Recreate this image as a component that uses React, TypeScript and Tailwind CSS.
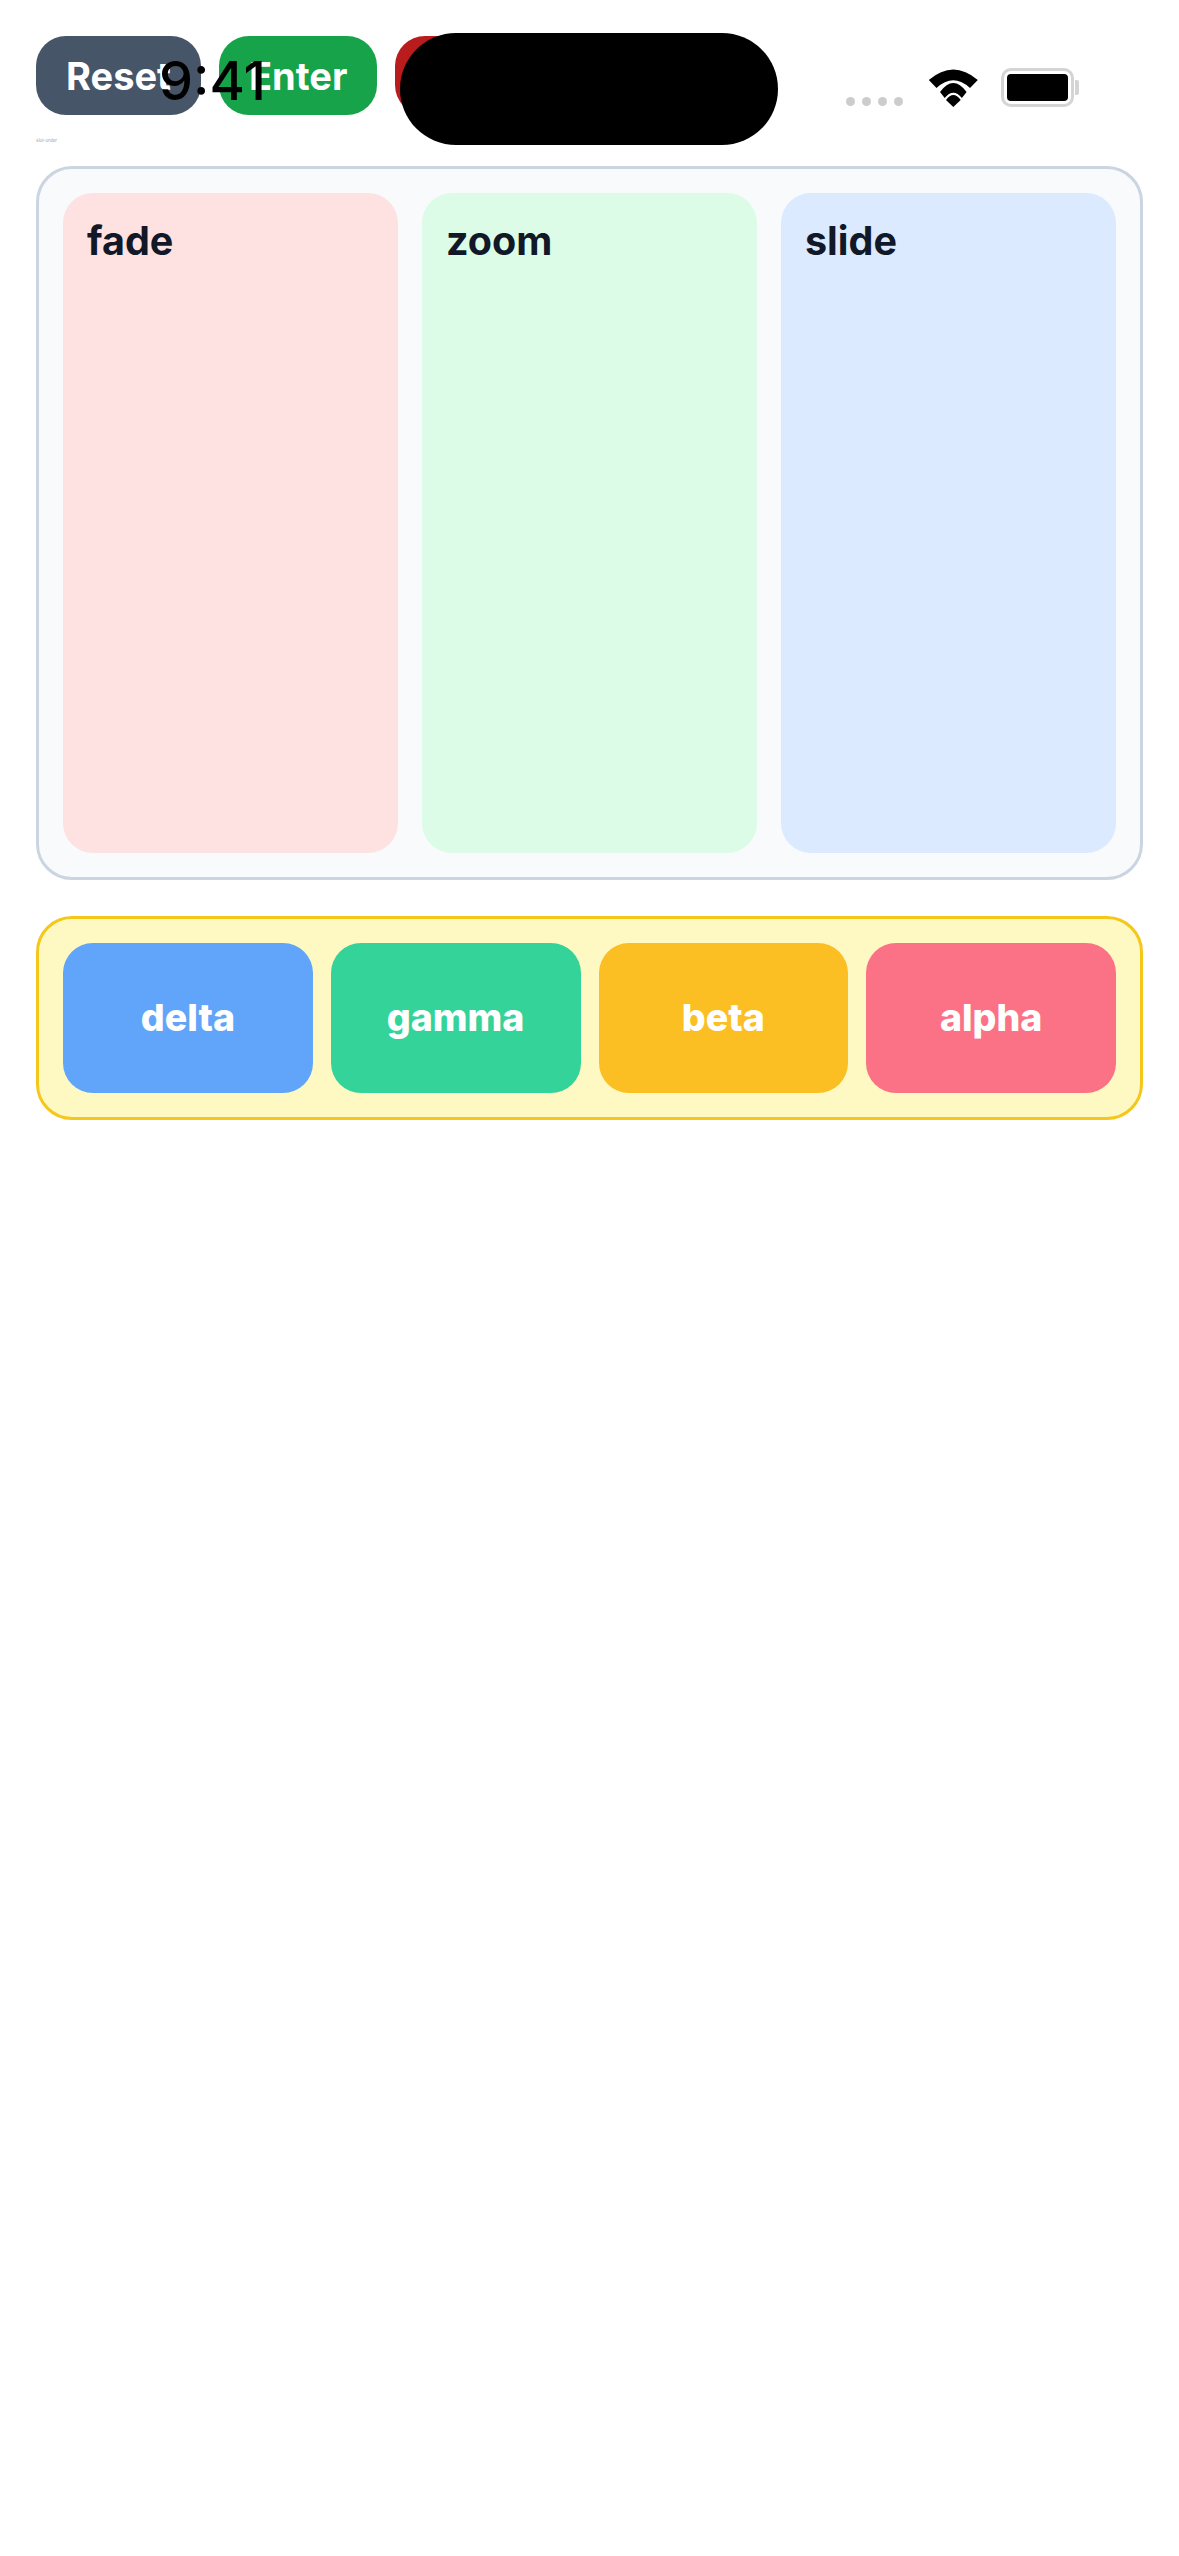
const columns = [
  { name: "fade", bg: "bg-[#fee2e2]" },
  { name: "zoom", bg: "bg-[#dcfce7]" },
  { name: "slide", bg: "bg-[#dbeafe]" },
];

const chips = [
  { name: "delta", bg: "bg-[#60a5fa]" },
  { name: "gamma", bg: "bg-[#34d399]" },
  { name: "beta", bg: "bg-[#fbbf24]" },
  { name: "alpha", bg: "bg-[#fb7185]" },
];

function StatusBar() {
  return (
    <div className="absolute left-0 top-0 h-[150px] w-[1179px]">
      <span className="absolute left-[159px] top-[50px] font-['Inter',sans-serif] text-[54px] font-medium leading-[62px] text-black">
        9:41
      </span>
      <div className="absolute left-[400px] top-[33px] h-[112px] w-[378px] rounded-[56px] bg-black" />
      <div className="absolute left-[846px] top-[97px] flex gap-[7px]">
        <div className="h-[9px] w-[9px] rounded-full bg-[#cccccc]" />
        <div className="h-[9px] w-[9px] rounded-full bg-[#cccccc]" />
        <div className="h-[9px] w-[9px] rounded-full bg-[#cccccc]" />
        <div className="h-[9px] w-[9px] rounded-full bg-[#cccccc]" />
      </div>
      <svg className="absolute left-[928px] top-[69px]" width="50" height="38" viewBox="0 0 50 38">
        <path d="M0.8 11 Q25.3 -10 49.8 11 L42 19 Q25.3 3.5 8.5 19 Z" fill="#000" />
        <path d="M12 23 Q25.3 5 38.6 23 L33.9 29 Q25.3 18.5 16.7 29 Z" fill="#000" />
        <path d="M18 31 Q25.3 21 32.7 31 L25.3 38 Z" fill="#000" />
      </svg>
      <div className="absolute left-[1001px] top-[68px] h-[39px] w-[73px] rounded-[10px] border-[3px] border-[#d4d4d4] bg-white p-[3px]">
        <div className="h-full w-full rounded-[4px] bg-black" />
      </div>
      <div className="absolute left-[1075px] top-[80px] h-[15px] w-[4px] rounded-r-[2px] bg-[#d4d4d4]" />
    </div>
  );
}

export default function App() {
  return (
    <div className="relative min-h-[2556px] w-[1179px] bg-white font-['Inter',sans-serif]">
      <div className="flex flex-col px-[36px] pt-[36px]">
        <div className="flex gap-[18px]">
          <button className="h-[79px] rounded-[30px] bg-[#475569] px-[30px] pt-[1px] text-[38px] font-bold text-white">Reset</button>
          <button className="h-[79px] rounded-[30px] bg-[#16a34a] px-[30px] pt-[1px] text-[38px] font-bold text-white">Enter</button>
          <button className="h-[79px] rounded-[30px] bg-[#b91c1c] px-[30px] pt-[1px] text-[38px] font-bold text-white">Exit</button>
        </div>
        <div className="mt-[20px] h-[12px] text-[4.5px] leading-[12px] text-[#94a3b8]">slot-order</div>
        <div className="mt-[19px] flex h-[714px] gap-[24px] rounded-[36px] border-[3px] border-[#cbd5e1] bg-[#f8fafc] p-[24px]">
          {columns.map((c) => (
            <div key={c.name} className={`flex-1 rounded-[30px] p-[24px] ${c.bg}`}>
              <div className="text-[39.5px] font-bold leading-[48px] text-[#111827]">{c.name}</div>
            </div>
          ))}
        </div>
        <div className="mt-[36px] flex h-[204px] gap-[18px] rounded-[36px] border-[3px] border-[#f5c71a] bg-[#fef9c3] p-[24px]">
          {chips.map((c) => (
            <div key={c.name} className={`flex flex-1 items-center justify-center rounded-[30px] text-[37.5px] font-extrabold text-white ${c.bg}`}>
              {c.name}
            </div>
          ))}
        </div>
      </div>
      <StatusBar />
    </div>
  );
}
